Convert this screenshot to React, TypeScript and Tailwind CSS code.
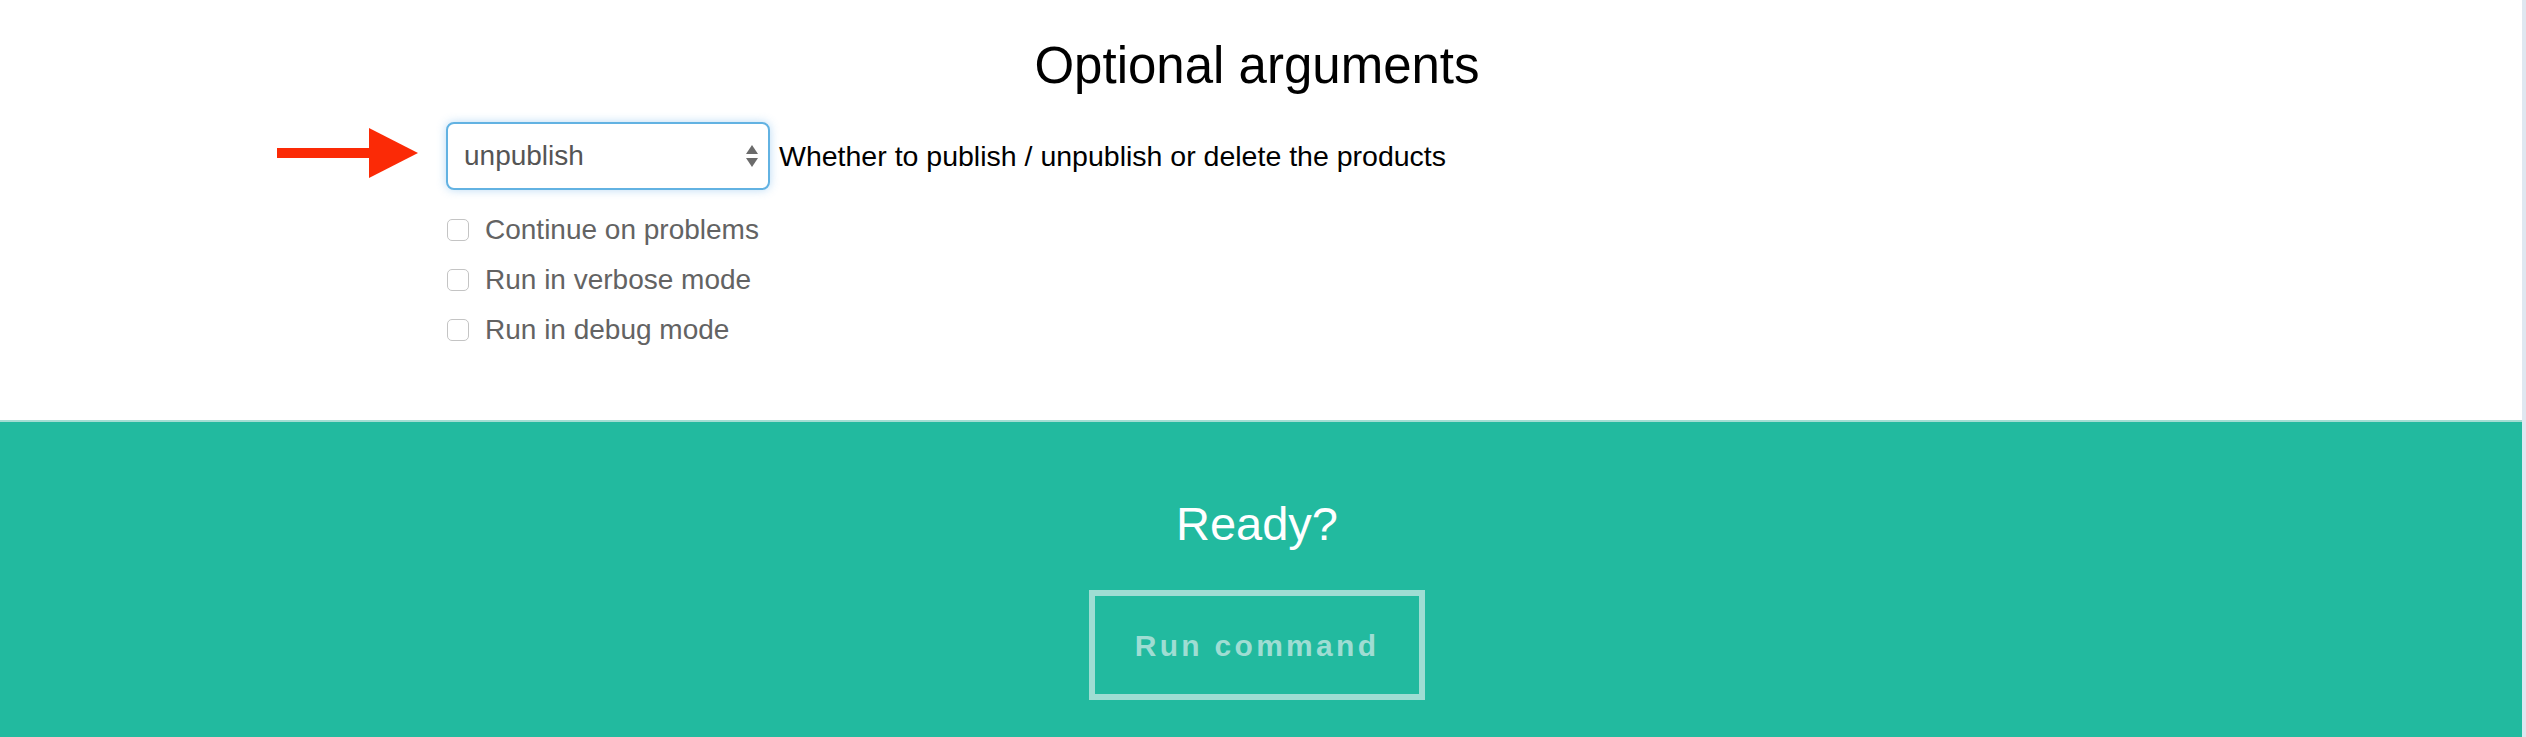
const options = ['Continue on problems', 'Run in verbose mode', 'Run in debug mode']

function Arrow() {
  return (
    <svg className="absolute left-[-169px] top-[6px]" width="141" height="50" viewBox="0 0 141 50">
      <rect x="0" y="20" width="94" height="10" fill="#fb2a06" />
      <polygon points="92,0 141,25 92,50" fill="#fb2a06" />
    </svg>
  )
}

function FakeSelect({ value }: { value: string }) {
  return (
    <div className="w-[324px] h-[68px] shrink-0 rounded-[8px] border-2 border-[#62b2e2] bg-white shadow-[0_0_10px_rgba(102,175,233,0.45)] flex items-center pl-[16px] pr-[9px]">
      <span className="flex-1 text-[28px] text-[#555555]">{value}</span>
      <svg width="14" height="24" viewBox="0 0 14 24">
        <polygon points="7,1 13,10 1,10" fill="#6b6b6b" />
        <polygon points="1,14 13,14 7,23" fill="#6b6b6b" />
      </svg>
    </div>
  )
}

export default function App() {
  return (
    <div className="flex w-[2526px] h-[737px] overflow-hidden bg-white font-['Liberation_Sans',Arial,sans-serif]">
      <div className="flex-1 flex flex-col">
        {/* Optional arguments */}
        <section className="h-[420px] bg-white">
          <div className="pr-[8px] pt-[40px]">
            <h2 className="text-center text-[51px] leading-[51px] text-black">Optional arguments</h2>
          </div>

          <div className="w-[1630px] mx-auto pt-[31px]">
            <div className="relative flex items-center">
              <Arrow />
              <FakeSelect value="unpublish" />
              <span className="ml-[9px] text-[28.5px] text-black">Whether to publish / unpublish or delete the products</span>
            </div>

            <div className="mt-[15px] flex flex-col">
              {options.map((o) => (
                <label key={o} className="h-[50px] flex items-center gap-[16px] pl-[1px]">
                  <span className="w-[22px] h-[22px] rounded-[5px] border border-[#c4c4c4] bg-white shrink-0" />
                  <span className="text-[28px] text-[#636363]">{o}</span>
                </label>
              ))}
            </div>
          </div>
        </section>

        {/* Ready */}
        <section className="flex-1 border-t-2 border-[#a3ddd3] bg-[#22ba9f]">
          <div className="pr-[8px] pt-[78px] flex flex-col items-center">
            <h3 className="text-[47px] leading-[47px] text-white">Ready?</h3>
            <button className="mt-[43px] w-[336px] h-[110px] border-[6px] border-[#9fddd3] flex items-center justify-center text-[30px] font-bold tracking-[3.3px] text-[#9fddd3]">
              Run command
            </button>
          </div>
        </section>
      </div>
      <div className="w-[4px] bg-[#dfe7f0]" />
    </div>
  )
}
